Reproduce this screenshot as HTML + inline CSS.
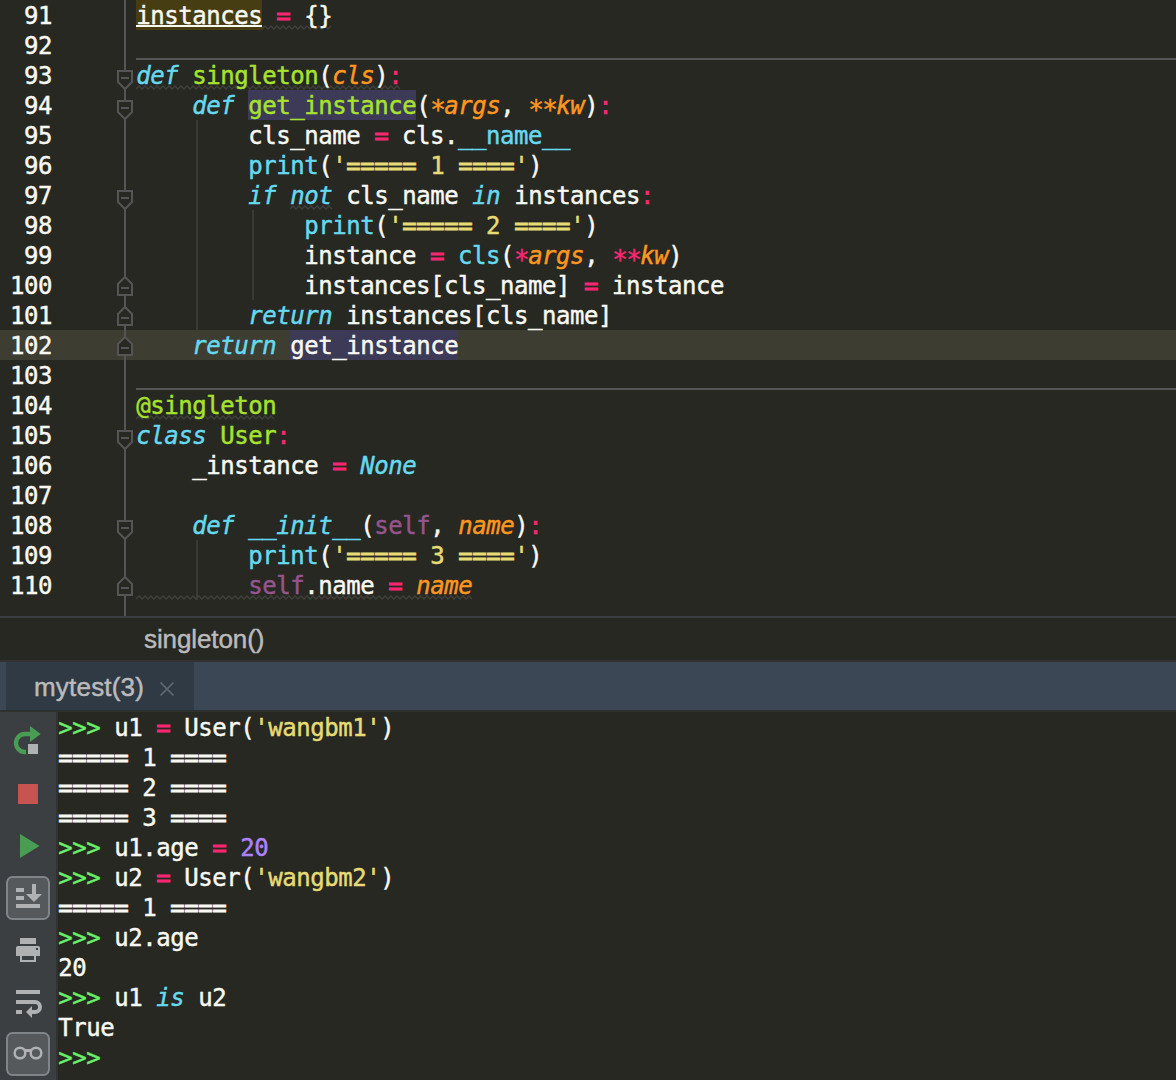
<!DOCTYPE html>
<html lang="en"><head><meta charset="utf-8"><title>mytest</title>
<style>

html,body{margin:0;padding:0;}
body{width:1176px;height:1080px;overflow:hidden;background:#272822;position:relative;color:#f8f8f2;}
.abs{position:absolute;}
.code{font-family:"DejaVu Sans Mono", "Liberation Mono", monospace;font-size:24.0px;letter-spacing:-0.453px;line-height:30px;white-space:pre;color:#f8f8f2;font-kerning:none;font-variant-ligatures:none;-webkit-text-stroke:0.45px;}
.ln{position:absolute;left:0;width:1176px;height:30px;}
.ln .t{position:absolute;left:136.2px;top:1.0px;height:30px;}
.ln .n{position:absolute;left:0;width:52px;text-align:right;top:1.0px;height:30px;}
.cl .t{left:58.2px;}
.e{-webkit-text-stroke:0.9px;}
.a{position:relative;top:4.5px;font-style:normal;font-size:26px;letter-spacing:-1.65px;line-height:0;}
.kw{color:#66d9ef;font-style:italic;}
.bi{color:#66d9ef;}
.fn{color:#a6e22e;}
.pr{color:#fd971f;font-style:italic;}
.op{color:#f92672;}
.st{color:#e6db74;}
.nu{color:#ae81ff;}
.sf{color:#94558d;}
.gr{color:#68f068;}
.ui{font-family:"Liberation Sans",sans-serif;font-size:26px;line-height:30px;color:#bbbbbb;white-space:pre;-webkit-text-stroke:0.45px;}

</style></head><body>
<div class="abs" style="left:0;top:330px;width:1176px;height:30px;background:#3e3d32"></div>
<div class="abs" style="left:136px;top:0;width:126px;height:30px;background:#473d13"></div>
<div class="abs" style="left:248px;top:90px;width:168px;height:30px;background:#3c3a56"></div>
<div class="abs" style="left:290px;top:330px;width:168px;height:30px;background:#3c3a56"></div>
<div class="abs" style="left:136px;top:58px;width:1040px;height:2px;background:#555555"></div>
<div class="abs" style="left:136px;top:388px;width:1040px;height:2px;background:#555555"></div>
<svg class="abs" style="left:0;top:0" width="1176" height="618" viewBox="0 0 1176 618"><rect x="196" y="120" width="2" height="210" fill="#3b3a32"/><rect x="252" y="210" width="2" height="90" fill="#3b3a32"/><rect x="196" y="540" width="2" height="60" fill="#3b3a32"/><rect x="124" y="0" width="2" height="616" fill="#555555"/><path d="M118 71 H132 V82 L125 89 L118 82 Z" fill="#272822" stroke="#555555" stroke-width="2"/><rect x="121" y="77" width="8" height="2" fill="#555555"/><path d="M118 101 H132 V112 L125 119 L118 112 Z" fill="#272822" stroke="#555555" stroke-width="2"/><rect x="121" y="107" width="8" height="2" fill="#555555"/><path d="M118 191 H132 V202 L125 209 L118 202 Z" fill="#272822" stroke="#555555" stroke-width="2"/><rect x="121" y="197" width="8" height="2" fill="#555555"/><path d="M118 431 H132 V442 L125 449 L118 442 Z" fill="#272822" stroke="#555555" stroke-width="2"/><rect x="121" y="437" width="8" height="2" fill="#555555"/><path d="M118 521 H132 V532 L125 539 L118 532 Z" fill="#272822" stroke="#555555" stroke-width="2"/><rect x="121" y="527" width="8" height="2" fill="#555555"/><path d="M118 295 H132 V284 L125 277 L118 284 Z" fill="#272822" stroke="#555555" stroke-width="2"/><rect x="121" y="287" width="8" height="2" fill="#555555"/><path d="M118 325 H132 V314 L125 307 L118 314 Z" fill="#272822" stroke="#555555" stroke-width="2"/><rect x="121" y="317" width="8" height="2" fill="#555555"/><path d="M118 355 H132 V344 L125 337 L118 344 Z" fill="#272822" stroke="#555555" stroke-width="2"/><rect x="121" y="347" width="8" height="2" fill="#555555"/><path d="M118 595 H132 V584 L125 577 L118 584 Z" fill="#272822" stroke="#555555" stroke-width="2"/><rect x="121" y="587" width="8" height="2" fill="#555555"/><polyline points="262,29 265,26 268,29 271,26 274,29 277,26 280,29 283,26 286,29 289,26 292,29 295,26 298,29 301,26 304,29 307,26 310,29 313,26 316,29 319,26 322,29 325,26 328,29 331,26" fill="none" stroke="#41413c" stroke-width="1.4"/><polyline points="136,89 139,86 142,89 145,86 148,89 151,86 154,89 157,86 160,89 163,86 166,89 169,86 172,89 175,86 178,89 181,86 184,89 187,86 190,89 193,86 196,89 199,86 202,89 205,86 208,89 211,86 214,89 217,86 220,89 223,86 226,89 229,86 232,89 235,86 238,89 241,86 244,89 247,86 250,89 253,86 256,89 259,86 262,89 265,86 268,89 271,86 274,89 277,86 280,89 283,86 286,89 289,86 292,89 295,86 298,89 301,86 304,89 307,86 310,89 313,86 316,89 319,86 322,89 325,86 328,89 331,86 334,89 337,86 340,89 343,86 346,89 349,86 352,89 355,86 358,89 361,86 364,89 367,86 370,89 373,86 376,89 379,86 382,89 385,86 388,89 391,86 394,89 397,86 400,89" fill="none" stroke="#41413c" stroke-width="1.4"/><polyline points="290,209 293,206 296,209 299,206 302,209 305,206 308,209 311,206 314,209 317,206 320,209 323,206 326,209 329,206 332,209" fill="none" stroke="#41413c" stroke-width="1.4"/><polyline points="136,419 139,416 142,419 145,416 148,419 151,416 154,419 157,416 160,419 163,416 166,419 169,416 172,419 175,416 178,419 181,416 184,419 187,416 190,419 193,416 196,419 199,416 202,419 205,416 208,419 211,416 214,419 217,416 220,419 223,416 226,419 229,416 232,419 235,416 238,419 241,416 244,419 247,416 250,419 253,416 256,419 259,416 262,419 265,416 268,419 271,416 274,419" fill="none" stroke="#41413c" stroke-width="1.4"/><polyline points="136,599 139,596 142,599 145,596 148,599 151,596 154,599 157,596 160,599 163,596 166,599 169,596 172,599 175,596 178,599 181,596 184,599 187,596 190,599 193,596 196,599 199,596 202,599 205,596 208,599 211,596 214,599 217,596 220,599 223,596 226,599 229,596 232,599 235,596 238,599 241,596 244,599 247,596 250,599 253,596 256,599 259,596 262,599 265,596 268,599 271,596 274,599 277,596 280,599 283,596 286,599 289,596 292,599 295,596 298,599 301,596 304,599 307,596 310,599 313,596 316,599 319,596 322,599 325,596 328,599 331,596 334,599 337,596 340,599 343,596 346,599 349,596 352,599 355,596 358,599 361,596 364,599 367,596 370,599 373,596 376,599 379,596 382,599 385,596 388,599 391,596 394,599 397,596 400,599 403,596 406,599 409,596 412,599 415,596 418,599 421,596 424,599 427,596 430,599 433,596 436,599 439,596 442,599 445,596 448,599 451,596 454,599 457,596 460,599 463,596 466,599 469,596 472,599" fill="none" stroke="#41413c" stroke-width="1.4"/><rect x="136" y="25" width="126" height="2" fill="#f8f8f2"/></svg>
<div class="code">
<div class="ln" style="top:0px"><span class="n">91</span><span class="t">instances <span class="op"><span class="e">=</span></span> {}</span></div>
<div class="ln" style="top:30px"><span class="n">92</span><span class="t"></span></div>
<div class="ln" style="top:60px"><span class="n">93</span><span class="t"><span class="kw">def</span> <span class="fn">singleton</span>(<span class="pr">cls</span>)<span class="op">:</span></span></div>
<div class="ln" style="top:90px"><span class="n">94</span><span class="t">    <span class="kw">def</span> <span class="fn">get_instance</span>(<span class="pr"><span class="a">*</span>args</span>, <span class="pr"><span class="a">**</span>kw</span>)<span class="op">:</span></span></div>
<div class="ln" style="top:120px"><span class="n">95</span><span class="t">        cls_name <span class="op"><span class="e">=</span></span> cls.<span class="bi">__name__</span></span></div>
<div class="ln" style="top:150px"><span class="n">96</span><span class="t">        <span class="bi">print</span>(<span class="st">'<span class="e">=====</span> 1 <span class="e">====</span>'</span>)</span></div>
<div class="ln" style="top:180px"><span class="n">97</span><span class="t">        <span class="kw">if</span> <span class="kw">not</span> cls_name <span class="kw">in</span> instances<span class="op">:</span></span></div>
<div class="ln" style="top:210px"><span class="n">98</span><span class="t">            <span class="bi">print</span>(<span class="st">'<span class="e">=====</span> 2 <span class="e">====</span>'</span>)</span></div>
<div class="ln" style="top:240px"><span class="n">99</span><span class="t">            instance <span class="op"><span class="e">=</span></span> <span class="bi">cls</span>(<span class="op"><span class="a">*</span></span><span class="pr">args</span>, <span class="op"><span class="a">**</span></span><span class="pr">kw</span>)</span></div>
<div class="ln" style="top:270px"><span class="n">100</span><span class="t">            instances[cls_name] <span class="op"><span class="e">=</span></span> instance</span></div>
<div class="ln" style="top:300px"><span class="n">101</span><span class="t">        <span class="kw">return</span> instances[cls_name]</span></div>
<div class="ln" style="top:330px"><span class="n">102</span><span class="t">    <span class="kw">return</span> get_instance</span></div>
<div class="ln" style="top:360px"><span class="n">103</span><span class="t"></span></div>
<div class="ln" style="top:390px"><span class="n">104</span><span class="t"><span class="fn">@singleton</span></span></div>
<div class="ln" style="top:420px"><span class="n">105</span><span class="t"><span class="kw">class</span> <span class="fn">User</span><span class="op">:</span></span></div>
<div class="ln" style="top:450px"><span class="n">106</span><span class="t">    _instance <span class="op"><span class="e">=</span></span> <span class="kw">None</span></span></div>
<div class="ln" style="top:480px"><span class="n">107</span><span class="t"></span></div>
<div class="ln" style="top:510px"><span class="n">108</span><span class="t">    <span class="kw">def</span> <span class="kw">__init__</span>(<span class="sf">self</span>, <span class="pr">name</span>)<span class="op">:</span></span></div>
<div class="ln" style="top:540px"><span class="n">109</span><span class="t">        <span class="bi">print</span>(<span class="st">'<span class="e">=====</span> 3 <span class="e">====</span>'</span>)</span></div>
<div class="ln" style="top:570px"><span class="n">110</span><span class="t">        <span class="sf">self</span>.name <span class="op"><span class="e">=</span></span> <span class="pr">name</span></span></div>
</div>
<div class="abs" style="left:0;top:616px;width:1176px;height:2px;background:#3c3d42"></div>
<div class="abs ui" style="left:144px;top:624px;letter-spacing:-0.1px">singleton()</div>
<div class="abs" style="left:0;top:660px;width:1176px;height:2px;background:#323232"></div>
<div class="abs" style="left:0;top:662px;width:1176px;height:48px;background:#3c4756"></div>
<div class="abs" style="left:6px;top:662px;width:188px;height:48px;background:#303a45"></div>
<div class="abs ui" style="left:34px;top:672px;letter-spacing:0.2px">mytest(3)</div>
<svg class="abs" style="left:158px;top:680px" width="18" height="18" viewBox="0 0 18 18"><path d="M2.5 2.5 L15.5 15.5 M15.5 2.5 L2.5 15.5" stroke="#606872" stroke-width="1.7" fill="none"/></svg>
<div class="abs" style="left:0;top:710px;width:1176px;height:2px;background:#2f3030"></div>
<div class="abs" style="left:0;top:712px;width:56px;height:368px;background:#3c3f41"></div>
<div class="abs" style="left:56px;top:712px;width:2px;height:368px;background:#323232"></div>
<svg class="abs" style="left:0;top:712px" width="56" height="368" viewBox="0 712 56 368"><path d="M26 752 H25 A9 9 0 0 1 25 734 H31" fill="none" stroke="#499c54" stroke-width="4.3"/><path d="M30 726 L40.7 734 L30 742 Z" fill="#499c54"/><rect x="28" y="744" width="10" height="10" fill="#afb1b3"/><rect x="18" y="784" width="20" height="20" fill="#c75450"/><path d="M20 834 L39.5 846 L20 858 Z" fill="#499c54"/><rect x="7" y="877" width="42" height="42" rx="5.5" ry="5.5" fill="#55595c" stroke="#7f8489" stroke-width="2"/><rect x="16" y="888" width="8" height="4" fill="#afb1b3"/><rect x="16" y="896" width="8" height="4" fill="#afb1b3"/><rect x="16" y="904" width="24" height="4" fill="#afb1b3"/><path d="M32 884 H36 V894 H42 L34 902 L26 894 H32 Z" fill="#afb1b3"/><rect x="20" y="938" width="16" height="6" fill="#afb1b3"/><path d="M16 956 V948 Q16 946 18 946 H38 Q40 946 40 948 V956 Z" fill="#afb1b3"/><rect x="36" y="948" width="2" height="2" fill="#3c3f41"/><path d="M21 956 V961 H35 V956" fill="none" stroke="#afb1b3" stroke-width="2"/><rect x="16" y="990" width="24" height="4" fill="#afb1b3"/><path d="M16 1002 H35 A5 5 0 0 1 35 1012 H31" fill="none" stroke="#afb1b3" stroke-width="4"/><path d="M26 1012 L32 1006 V1018 Z" fill="#afb1b3"/><rect x="16" y="1010" width="6" height="4" fill="#afb1b3"/><rect x="7" y="1033" width="42" height="42" rx="5.5" ry="5.5" fill="#55595c" stroke="#7f8489" stroke-width="2"/><circle cx="20" cy="1053" r="5.3" fill="none" stroke="#afb1b3" stroke-width="2.5"/><circle cx="36" cy="1053" r="5.3" fill="none" stroke="#afb1b3" stroke-width="2.5"/><rect x="24" y="1049" width="8" height="3" fill="#afb1b3"/></svg>
<div class="code cl">
<div class="ln" style="top:712px"><span class="t"><span class="gr">&gt;&gt;&gt;</span> u1 <span class="op"><span class="e">=</span></span> User(<span class="st">'wangbm1'</span>)</span></div>
<div class="ln" style="top:742px"><span class="t"><span class="e">=====</span> 1 <span class="e">====</span></span></div>
<div class="ln" style="top:772px"><span class="t"><span class="e">=====</span> 2 <span class="e">====</span></span></div>
<div class="ln" style="top:802px"><span class="t"><span class="e">=====</span> 3 <span class="e">====</span></span></div>
<div class="ln" style="top:832px"><span class="t"><span class="gr">&gt;&gt;&gt;</span> u1.age <span class="op"><span class="e">=</span></span> <span class="nu">20</span></span></div>
<div class="ln" style="top:862px"><span class="t"><span class="gr">&gt;&gt;&gt;</span> u2 <span class="op"><span class="e">=</span></span> User(<span class="st">'wangbm2'</span>)</span></div>
<div class="ln" style="top:892px"><span class="t"><span class="e">=====</span> 1 <span class="e">====</span></span></div>
<div class="ln" style="top:922px"><span class="t"><span class="gr">&gt;&gt;&gt;</span> u2.age</span></div>
<div class="ln" style="top:952px"><span class="t">20</span></div>
<div class="ln" style="top:982px"><span class="t"><span class="gr">&gt;&gt;&gt;</span> u1 <span class="kw">is</span> u2</span></div>
<div class="ln" style="top:1012px"><span class="t">True</span></div>
<div class="ln" style="top:1042px"><span class="t"><span class="gr">&gt;&gt;&gt;</span></span></div>
</div>
</body></html>
